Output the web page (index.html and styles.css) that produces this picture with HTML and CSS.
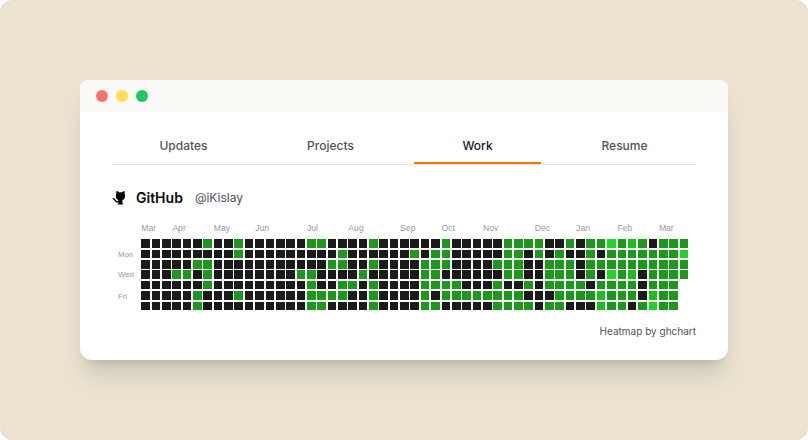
FILE: index.html
```
<!DOCTYPE html>
<html lang="en">

<head>
    <meta charset="UTF-8">
    <meta name="viewport" content="width=device-width, initial-scale=1.0">
    <title>Work</title>
    <link rel="stylesheet" href="styles.css">
</head>

<body>
    <div class="backdrop">
        <main class="window">
            <div class="title-bar">
                <span class="dot red"></span>
                <span class="dot yellow"></span>
                <span class="dot green"></span>
            </div>
            <div class="content">
                <nav class="tabs">
                    <a class="tab" href="#updates">Updates</a>
                    <a class="tab" href="#projects">Projects</a>
                    <a class="tab active" href="#work" aria-current="page">Work</a>
                    <a class="tab" href="#resume">Resume</a>
                </nav>
                <section class="github">
                    <div class="profile">
                        <svg class="cat" viewBox="2 0 16 16" aria-hidden="true">
                            <path d="M6.600 1.100c.9.100 1.700.5 2.300 1.100h3.200c.6-.6 1.400-1 2.300-1.100.4.900.4 1.800.3 2.500.3.700.4 1.500.4 2.500-.1 2.300-.9 3.500-2.700 4v3.200c.5.2 1 .5 1 1.200H7.500c0-.7.500-1 1-1.200v-.9c-2 .4-2.900-.3-3.700-1.500-.6-.9-1-1.500-2-2-.5-.5 0-1.100.7-.9 1.200.4 1.700 1.200 2.300 2.100.5.800 1.300 1 2.600.7v-.7c-1.700-.5-2.500-1.700-2.600-4 0-1 .1-1.800.5-2.500-.2-.7-.1-1.600.3-2.500z" />
                        </svg>
                        <h1>GitHub</h1>
                        <a class="handle" href="#ikislay">@iKislay</a>
                    </div>
                    <svg class="chart" id="chart" viewBox="-7 0 677 104" role="img" aria-label="Contributions over the last year"></svg>
                    <p class="credit">Heatmap by <a href="#ghchart">ghchart</a></p>
                </section>
            </div>
        </main>
    </div>
    <script src="chart.js"></script>
</body>

</html>
```
FILE: styles.css
```
body {
    margin: 0;
    background: #fff;
    font-family: Inter, "Liberation Sans", sans-serif;
    color: #18181b;
}

a {
    color: inherit;
    text-decoration: none;
}

.backdrop {
    box-sizing: border-box;
    min-height: 100vh;
    padding: 80px;
    background: #ebe3d0;
    border-radius: 12px;
}

.window {
    overflow: hidden;
    background: #fff;
    border-radius: 8px 8px 12px 12px;
    box-shadow: 0 20px 25px -5px rgba(0, 0, 0, 0.12), 0 8px 10px -6px rgba(0, 0, 0, 0.12);
}

/* Title bar */
.title-bar {
    display: flex;
    align-items: center;
    gap: 8px;
    height: 32px;
    padding: 0 16px;
    background: #faf9f6;
}

.dot {
    width: 12px;
    height: 12px;
    border-radius: 50%;
}

.dot.red {
    background: #f87171;
}

.dot.yellow {
    background: #fde047;
}

.dot.green {
    background: #22c55e;
}

.content {
    padding: 16px 32px 21px;
}

/* Tabs */
.tabs {
    display: grid;
    grid-template-columns: repeat(4, 1fr);
    gap: 20px;
    padding: 0 8px;
    border-bottom: 1px solid #e4e4e7;
}

.tab {
    padding: 9px 0 7px;
    border-bottom: 2px solid transparent;
    font-size: 12px;
    font-weight: 500;
    line-height: 18px;
    text-align: center;
    color: #52525b;
}

.tab.active {
    border-color: #ee7b06;
    color: #18181b;
}

/* Profile */
.profile {
    display: flex;
    align-items: center;
    margin: 23px 0 14px;
    line-height: 20px;
}

.cat {
    width: 16px;
    height: 16px;
    margin-right: 8px;
    fill: #09090b;
}

h1 {
    margin: 0 12px 0 0;
    font-size: 14px;
    font-weight: 600;
    color: #09090b;
}

.handle {
    font-size: 12px;
    color: #52525b;
}

/* Contribution chart */
.chart {
    display: block;
    width: 100%;
    height: 90px;
    font-family: Helvetica, "Liberation Sans", sans-serif;
}

.chart text {
    fill: #999;
}

.chart .month {
    font-size: 10px;
}

.chart .day {
    font-size: 9px;
}

.chart rect {
    shape-rendering: crispEdges;
}

.level0 {
    fill: #1a1a1a;
}

.level1 {
    fill: #1b991b;
}

.level2 {
    fill: #1bbf1b;
}

.level3 {
    fill: #1ed722;
}

.credit {
    margin: 11px 0 0;
    font-size: 10px;
    line-height: 16px;
    text-align: right;
    color: #52525b;
}
```
FILE: chart.js
```
const chart = document.getElementById('chart');

// one string per weekday, one digit per week
const days = [
    '00000010010000001100001000000100000111100101131210111',
    '00000000010000000001000000101100000110101001011111113',
    '00000110000000000011001000011100001110011101111111111',
    '00011010000000011000010000011000000110011101031201111',
    '0000001000000000100110100001111000100101111011110111',
    '0000010001000000111100100001011111111000111121110211',
    '0000010000000000110000100001100000111101100021101311'
];

const months = [
    ['Mar', 0], ['Apr', 3], ['May', 7], ['Jun', 11], ['Jul', 16], ['Aug', 20], ['Sep', 25],
    ['Oct', 29], ['Nov', 33], ['Dec', 38], ['Jan', 42], ['Feb', 46], ['Mar', 50]
];

function add(name, attrs, text) {
    const el = document.createElementNS('http://www.w3.org/2000/svg', name);
    for (const key in attrs) el.setAttribute(key, attrs[key]);
    if (text) el.textContent = text;
    chart.appendChild(el);
}

months.forEach(([label, week]) => {
    add('text', { class: 'month', x: 27 + week * 12, y: 10 }, label);
});

[['Mon', 40], ['Wed', 64], ['Fri', 89]].forEach(([label, y]) => {
    add('text', { class: 'day', x: 0, y: y }, label);
});

days.forEach((row, day) => {
    [...row].forEach((level, week) => {
        add('rect', { class: 'level' + level, x: 27 + week * 12, y: 20 + day * 12, width: 10, height: 10 });
    });
});
```
